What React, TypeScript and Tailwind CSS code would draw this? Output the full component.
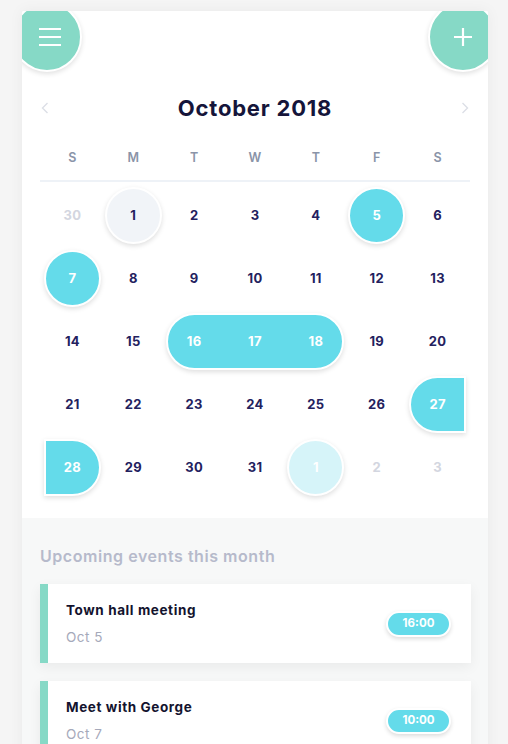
import React from "react";

const FONT = { fontFamily: "Inter, 'Noto Sans', sans-serif" };

type Cell = { n: number; kind?: "out" | "sel" | "today" | "next" | "range" };

const colStart = ["col-start-1", "col-start-2", "col-start-3", "col-start-4", "col-start-5", "col-start-6", "col-start-7"];

type Bg = { col: number; cls: string };

const rows: { cells: Cell[]; bgs: Bg[] }[] = [
  {
    cells: [{ n: 30, kind: "out" }, { n: 1, kind: "today" }, { n: 2 }, { n: 3 }, { n: 4 }, { n: 5, kind: "sel" }, { n: 6 }],
    bgs: [
      { col: 1, cls: "w-[57px] rounded-full bg-[#f1f4f8] justify-self-center" },
      { col: 5, cls: "w-[57px] rounded-full bg-[#64dbea] justify-self-center" },
    ],
  },
  {
    cells: [{ n: 7, kind: "sel" }, { n: 8 }, { n: 9 }, { n: 10 }, { n: 11 }, { n: 12 }, { n: 13 }],
    bgs: [{ col: 0, cls: "w-[57px] rounded-full bg-[#64dbea] justify-self-center" }],
  },
  {
    cells: [{ n: 14 }, { n: 15 }, { n: 16, kind: "range" }, { n: 17, kind: "range" }, { n: 18, kind: "range" }, { n: 19 }, { n: 20 }],
    bgs: [{ col: 2, cls: "col-span-3 mx-[2px] rounded-full bg-[#64dbea]" }],
  },
  {
    cells: [{ n: 21 }, { n: 22 }, { n: 23 }, { n: 24 }, { n: 25 }, { n: 26 }, { n: 27, kind: "sel" }],
    bgs: [{ col: 6, cls: "w-[57px] rounded-l-full bg-[#64dbea] justify-self-center" }],
  },
  {
    cells: [{ n: 28, kind: "sel" }, { n: 29 }, { n: 30 }, { n: 31 }, { n: 1, kind: "next" }, { n: 2, kind: "out" }, { n: 3, kind: "out" }],
    bgs: [
      { col: 0, cls: "w-[57px] rounded-r-full bg-[#64dbea] justify-self-center" },
      { col: 4, cls: "w-[57px] rounded-full bg-[#d6f4f9] justify-self-center" },
    ],
  },
];

function numColor(kind?: Cell["kind"]) {
  if (kind === "out") return "text-[#d3d6e0]";
  if (kind === "sel" || kind === "range" || kind === "next") return "text-white";
  return "text-[#23215e]";
}

function Events({ title, date, time }: { title: string; date: string; time: string }) {
  return (
    <div className="flex h-[79px] items-center bg-white border-l-[8px] border-[#86d9c6] pl-[18px] pr-[20px] shadow-[0_4px_12px_rgba(0,0,0,0.06)]">
      <div className="flex-1">
        <div className="text-[13.5px] font-bold text-[#13132e] leading-[18px] tracking-[0.6px]">{title}</div>
        <div className="mt-[9px] text-[13.5px] text-[#a5a9ba] leading-[18px] tracking-[0.5px]">{date}</div>
      </div>
      <div className="flex h-[26px] w-[65px] items-center justify-center rounded-full bg-[#64dbea] border-2 border-white shadow-[0_2px_4px_rgba(0,0,0,0.14)] text-[11.5px] font-bold text-white">
        {time}
      </div>
    </div>
  );
}

export default function App() {
  return (
    <div className="min-h-[744px] bg-[#f5f5f5] pt-[11px] pl-[22px]" style={FONT}>
      <div className="relative w-[466px] bg-white overflow-hidden shadow-[0_0_14px_rgba(0,0,0,0.05)]">
        {/* menu button */}
        <div className="absolute left-[-10px] top-[-9px] flex h-[70px] w-[70px] items-center justify-center rounded-full bg-[#86d9c6] border-2 border-white shadow-[0_2px_5px_rgba(0,0,0,0.12)]">
          <div className="ml-[6px] flex w-[22px] flex-col gap-[6px]">
            <div className="h-[2px] bg-white" />
            <div className="h-[2px] bg-white" />
            <div className="h-[2px] bg-white" />
          </div>
        </div>
        {/* plus button */}
        <div className="absolute left-[406px] top-[-9px] flex h-[70px] w-[70px] items-center justify-center rounded-full bg-[#86d9c6] border-2 border-white shadow-[0_2px_5px_rgba(0,0,0,0.12)]">
          <svg width="20" height="20" viewBox="0 0 20 20">
            <path d="M10 1v18M1 10h18" stroke="white" strokeWidth="2.2" />
          </svg>
        </div>

        <div className="px-[18px] pt-[82px] pb-[19px]">
          <div className="flex h-[30px] items-center justify-between">
            <svg width="8" height="12" viewBox="0 0 8 12" className="ml-[1px]">
              <path d="M6.5 1L1.5 6l5 5" stroke="#dcdfe6" strokeWidth="1.4" fill="none" />
            </svg>
            <div className="text-[22px] font-bold text-[#15153a] tracking-[0.8px]">October 2018</div>
            <svg width="8" height="12" viewBox="0 0 8 12" className="mr-[1px]">
              <path d="M1.5 1l5 5-5 5" stroke="#dcdfe6" strokeWidth="1.4" fill="none" />
            </svg>
          </div>
          <div className="mx-[2px] mt-[25px] grid h-[20px] grid-cols-7 items-center text-center text-[12.5px] font-semibold text-[#8a94a8]">
            {["S", "M", "T", "W", "T", "F", "S"].map((d, i) => (
              <div key={i}>{d}</div>
            ))}
          </div>
          <div className="mt-[12px] h-[2px] bg-[#eef2f7]" />
          <div className="mx-[2px] mt-[2px]">
            {rows.map((r, ri) => (
              <div key={ri} className="grid h-[63px] grid-cols-7">
                {r.bgs.map((b, bi) => (
                  <div
                    key={"b" + bi}
                    className={`${colStart[b.col]} row-start-1 self-center h-[57px] border-2 border-white shadow-[0_2px_5px_rgba(0,0,0,0.13)] ${b.cls}`}
                  />
                ))}
                {r.cells.map((c, ci) => (
                  <div
                    key={ci}
                    className={`${colStart[ci]} row-start-1 relative flex items-center justify-center text-[13px] font-bold tracking-[0.3px] ${numColor(c.kind)}`}
                  >
                    {c.n}
                  </div>
                ))}
              </div>
            ))}
          </div>
        </div>

        <div className="bg-[#f7f8f8] px-[18px] pt-[26px] pb-[40px]">
          <div className="text-[16px] font-semibold text-[#b6bacb] leading-[24px] tracking-[0.55px]">Upcoming events this month</div>
          <div className="mt-[16px] flex flex-col gap-[18px] mr-[-1px]">
            <Events title="Town hall meeting" date="Oct 5" time="16:00" />
            <Events title="Meet with George" date="Oct 7" time="10:00" />
          </div>
        </div>
      </div>
    </div>
  );
}
